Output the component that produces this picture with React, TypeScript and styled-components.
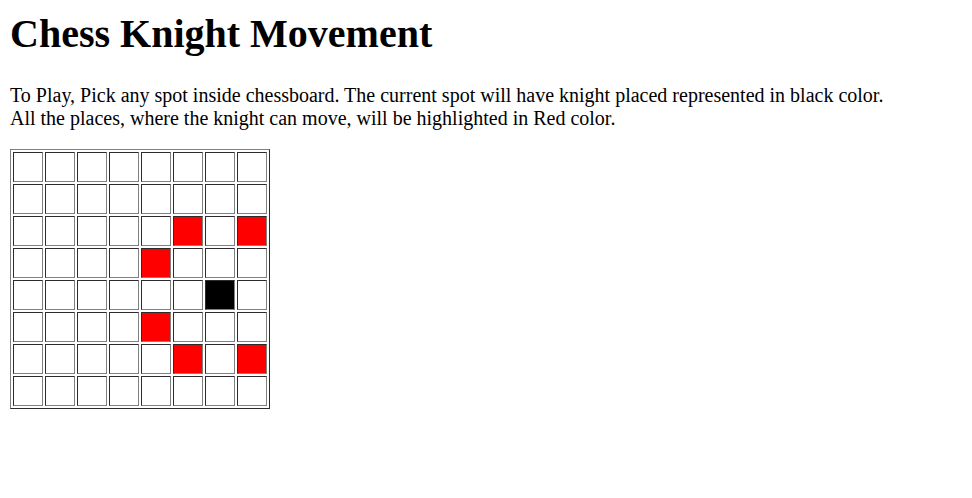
import styled, { createGlobalStyle } from "styled-components";
import { useState } from "react";

const GlobalStyle = createGlobalStyle`
  body {
    margin: 0;
    padding: 0 10px;
    background: #fff;
    color: #000;
    font-family: "Liberation Serif", "Times New Roman", serif;
  }
`;

const Title = styled.h1`
  font-size: 40px;
  font-weight: bold;
  margin: 10px 0 27px;
`;

const Intro = styled.p`
  font-size: 20px;
  line-height: 23px;
  margin: 0 0 19px;
`;

const Board = styled.table`
  border: 1px outset #808080;
  border-spacing: 2px;
`;

const Cell = styled.td<{ $state: "empty" | "knight" | "move" }>`
  width: 28px;
  height: 28px;
  padding: 0;
  border: 1px inset #808080;
  cursor: pointer;
  background: ${(p) =>
    p.$state === "knight" ? "#000" : p.$state === "move" ? "#f00" : "#fff"};
`;

const jumps = [
  [1, 2], [2, 1], [-1, 2], [-2, 1],
  [1, -2], [2, -1], [-1, -2], [-2, -1],
];

const App = () => {
  const [knight, setKnight] = useState<[number, number]>([4, 6]);

  const stateOf = (r: number, c: number) => {
    if (r === knight[0] && c === knight[1]) return "knight";
    const hit = jumps.some(
      ([dr, dc]) => knight[0] + dr === r && knight[1] + dc === c
    );
    return hit ? "move" : "empty";
  };

  return (
    <>
      <GlobalStyle />
      <Title>Chess Knight Movement</Title>
      <Intro>
        To Play, Pick any spot inside chessboard. The current spot will have
        knight placed represented in black color.
        <br />
        All the places, where the knight can move, will be highlighted in Red
        color.
      </Intro>
      <Board>
        <tbody>
          {Array.from({ length: 8 }, (_, r) => (
            <tr key={r}>
              {Array.from({ length: 8 }, (_, c) => (
                <Cell
                  key={c}
                  $state={stateOf(r, c)}
                  onClick={() => setKnight([r, c])}
                />
              ))}
            </tr>
          ))}
        </tbody>
      </Board>
    </>
  );
};

export default App;
